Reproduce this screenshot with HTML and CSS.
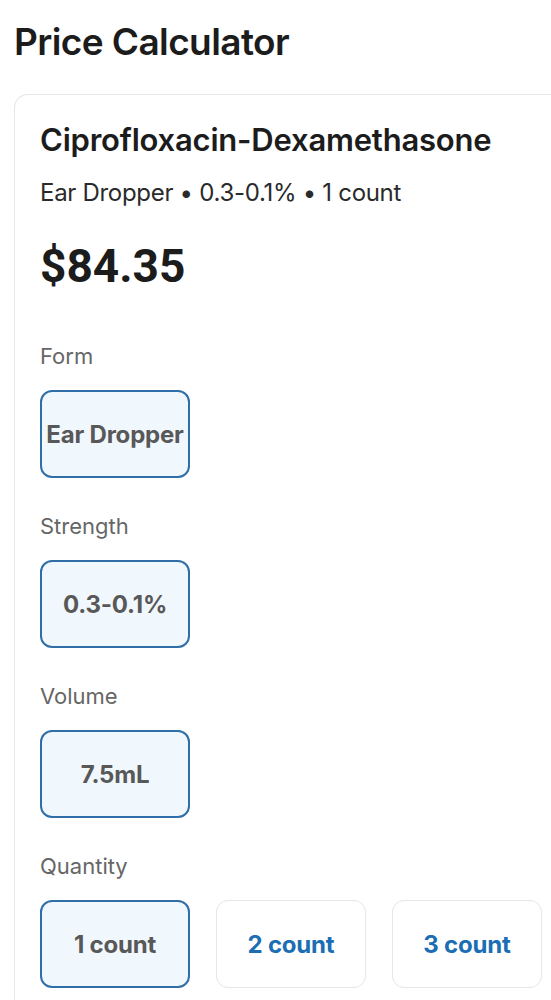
FILE: index.html
```html
<!DOCTYPE html>
<html>
<head>
<meta charset="utf-8">
<link rel="stylesheet" href="styles.css">
</head>
<body>
<h1 class="page-title">Price Calculator</h1>
<div class="card">
  <h2 class="drug-name">Ciprofloxacin-Dexamethasone</h2>
  <p class="summary">Ear Dropper • 0.3-0.1% • 1 count</p>
  <div class="price">$84.35</div>

  <div class="group">
    <div class="label">Form</div>
    <div class="options">
      <button class="opt selected">Ear Dropper</button>
    </div>
  </div>
  <div class="group">
    <div class="label">Strength</div>
    <div class="options">
      <button class="opt selected">0.3-0.1%</button>
    </div>
  </div>
  <div class="group">
    <div class="label">Volume</div>
    <div class="options">
      <button class="opt selected">7.5mL</button>
    </div>
  </div>
  <div class="group">
    <div class="label">Quantity</div>
    <div class="options">
      <button class="opt selected">1 count</button>
      <button class="opt">2 count</button>
      <button class="opt">3 count</button>
    </div>
  </div>
</div>
</body>
</html>
```
FILE: styles.css
```css
* { box-sizing: border-box; }
html, body { margin: 0; padding: 0; background: #fff; }
body {
  font-family: "Inter", "Noto Sans", sans-serif;
  color: #1f1f1f;
  padding: 0 0 0 14px;
  overflow: hidden;
}
.page-title {
  margin: 0;
  padding-top: 20px;
  font-size: 37px;
  line-height: 44px;
  font-weight: 600;
  letter-spacing: -0.6px;
  color: #1c1c1c;
  white-space: nowrap;
}
.card {
  margin-top: 30px;
  border: 1px solid #e6e6e6;
  border-right-width: 0;
  border-radius: 14px 0 0 14px;
  padding: 25px 0 40px 25px;
}
.drug-name {
  margin: 0;
  font-size: 31px;
  line-height: 40px;
  font-weight: 600;
  letter-spacing: -0.2px;
  color: #1c1c1c;
  white-space: nowrap;
}
.summary {
  margin: 18px 0 0 0;
  font-size: 24px;
  line-height: 30px;
  font-weight: 400;
  color: #2a2a2a;
  letter-spacing: -0.3px;
  white-space: nowrap;
}
.price {
  margin-top: 30px;
  font-family: "Roboto", "Inter", sans-serif;
  font-size: 46px;
  line-height: 56px;
  font-weight: 700;
  color: #1c1c1c;
}
.group { margin-top: 48px; }
.group + .group { margin-top: 34px; }
.label {
  font-size: 22px;
  line-height: 28px;
  color: #666;
}
.options {
  display: flex;
  gap: 26px;
  margin-top: 20px;
}
.opt {
  flex: none;
  width: 150px;
  height: 88px;
  border: 1px solid #e6e6e6;
  border-radius: 12px;
  background: #fff;
  font-family: "Inter", sans-serif;
  font-size: 24px;
  font-weight: 700;
  color: #1b6db4;
  padding: 0;
  letter-spacing: -0.2px;
  white-space: nowrap;
}
.opt.selected {
  border: 2px solid #2f6ea6;
  background: #f0f7fd;
  color: #585858;
}
```
